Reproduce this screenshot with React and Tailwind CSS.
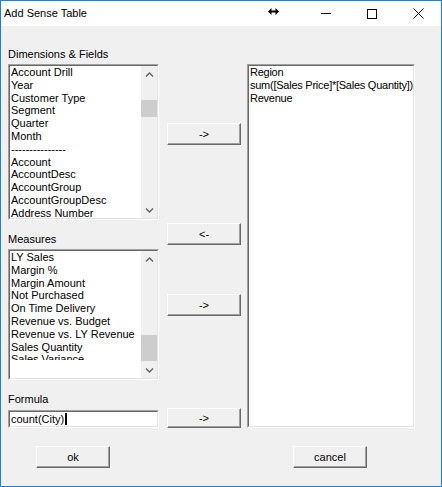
import React from 'react'

const dims = [
  'Account Drill',
  'Year',
  'Customer Type',
  'Segment',
  'Quarter',
  'Month',
  '---------------',
  'Account',
  'AccountDesc',
  'AccountGroup',
  'AccountGroupDesc',
  'Address Number',
]

const measures = [
  'LY Sales',
  'Margin %',
  'Margin Amount',
  'Not Purchased',
  'On Time Delivery',
  'Revenue vs. Budget',
  'Revenue vs. LY Revenue',
  'Sales Quantity',
  'Sales Variance',
]

const selected = ['Region', 'sum([Sales Price]*[Sales Quantity])', 'Revenue']

function Sunken({ className, children }) {
  return (
    <div className={`border border-t-[#a0a0a0] border-l-[#a0a0a0] border-r-white border-b-white ${className}`}>
      <div className="h-full border border-t-[#696969] border-l-[#696969] border-r-[#e3e3e3] border-b-[#e3e3e3] bg-white overflow-hidden">
        {children}
      </div>
    </div>
  )
}

function Chevron({ down }) {
  return (
    <svg width="9" height="6" viewBox="0 0 9 6" aria-hidden="true">
      <path
        d={down ? 'M1 1.5 L4.5 5 L8 1.5' : 'M1 4.5 L4.5 1 L8 4.5'}
        fill="none"
        stroke="#606060"
        strokeWidth="1.4"
      />
    </svg>
  )
}

function ScrollBar({ thumbTop, thumbHeight, atEnd }) {
  return (
    <div className="w-[16px] h-full bg-[#f0f0f0] flex flex-col shrink-0">
      <div className="h-[17px] flex items-center justify-center">
        <Chevron />
      </div>
      <div className={`flex-1 flex flex-col ${atEnd ? 'justify-end' : ''}`}>
        <div className="bg-[#cdcdcd]" style={{ marginTop: thumbTop, height: thumbHeight }} />
      </div>
      <div className="h-[17px] flex items-center justify-center">
        <Chevron down />
      </div>
    </div>
  )
}

function ListBox({ items, height, clip, scroll }) {
  return (
    <Sunken className={height}>
      <div className="flex h-full">
        <div className={`flex-1 pl-[1px] overflow-hidden ${clip}`}>
          {items.map(item => (
            <div key={item} className="leading-[12.8px] whitespace-nowrap">
              {item}
            </div>
          ))}
        </div>
        {scroll}
      </div>
    </Sunken>
  )
}

function Button({ children, className = '' }) {
  return (
    <button
      className={`w-[74px] h-[22px] bg-[#f0f0f0] border border-t-white border-l-white border-r-[#696969] border-b-[#696969] shadow-[inset_-1px_-1px_0_#a0a0a0] text-[11px] leading-none flex items-center justify-center ${className}`}
    >
      {children}
    </button>
  )
}

export default function App() {
  return (
    <div className="w-[442px] h-[487px] border border-[#1883d7] bg-[#f0f0f0] flex flex-col font-['Liberation_Sans',Arial,sans-serif] text-[11px] text-black">
      <div className="h-[25px] bg-white flex items-center shrink-0">
        <span className="pl-[3px] text-[11px]">Add Sense Table</span>
        <div className="ml-auto flex items-center h-full">
          <svg width="11" height="7" viewBox="0 0 11 7" className="mr-[24px] mb-[4px]" aria-hidden="true">
            <path d="M0 3.5 L3.5 0 L3.5 2.5 L7.5 2.5 L7.5 0 L11 3.5 L7.5 7 L7.5 4.5 L3.5 4.5 L3.5 7 Z" fill="#000" />
          </svg>
          <div className="w-[46px] h-full flex items-center justify-center">
            <div className="w-[10px] h-px bg-black" />
          </div>
          <div className="w-[46px] h-full flex items-center justify-center">
            <div className="w-[10px] h-[10px] border border-black" />
          </div>
          <div className="w-[46px] h-full flex items-center justify-center">
            <svg width="11" height="11" viewBox="0 0 11 11" aria-hidden="true">
              <path d="M0.5 0.5 L10.5 10.5 M10.5 0.5 L0.5 10.5" stroke="#000" strokeWidth="1" />
            </svg>
          </div>
        </div>
      </div>

      <div className="flex flex-col">
        <div className="flex items-start pl-[7px] h-[402px]">
          <div className="w-[151px] flex flex-col">
            <div className="mt-[22px] leading-[13px]">Dimensions &amp; Fields</div>
            <div className="mt-[3px]">
              <ListBox
                items={dims}
                height="h-[156px]"
                clip=""
                scroll={<ScrollBar thumbTop={17} thumbHeight={17} />}
              />
            </div>
            <div className="mt-[13px] leading-[13px]">Measures</div>
            <div className="mt-[3px]">
              <ListBox
                items={measures}
                height="h-[131px]"
                clip="max-h-[109px]"
                scroll={<ScrollBar thumbTop={0} thumbHeight={26} atEnd />}
              />
            </div>
            <div className="mt-[13px] leading-[13px]">Formula</div>
            <Sunken className="mt-[4px] h-[18px]">
              <div className="flex items-center h-full pl-[1px] leading-[14px]">
                <span>count(City)</span>
                <span className="w-[2px] h-[12px] bg-black ml-[1px]" />
              </div>
            </Sunken>
          </div>

          <div className="w-[74px] ml-[8px] flex flex-col">
            <Button className="mt-[97px]">-&gt;</Button>
            <Button className="mt-[78px]">&lt;-</Button>
            <Button className="mt-[49px]">-&gt;</Button>
            <Button className="mt-[92px] !h-[20px]">-&gt;</Button>
          </div>

          <Sunken className="ml-[6px] mt-[38px] w-[168px] h-[364px]">
            <div className="pl-[1px] tracking-[-0.25px]">
              {selected.map(item => (
                <div key={item} className="leading-[13px] whitespace-nowrap">
                  {item}
                </div>
              ))}
            </div>
          </Sunken>
        </div>

        <div className="flex mt-[18px] pl-[35px]">
          <Button>ok</Button>
          <Button className="ml-[183px]">cancel</Button>
        </div>
      </div>
    </div>
  )
}
